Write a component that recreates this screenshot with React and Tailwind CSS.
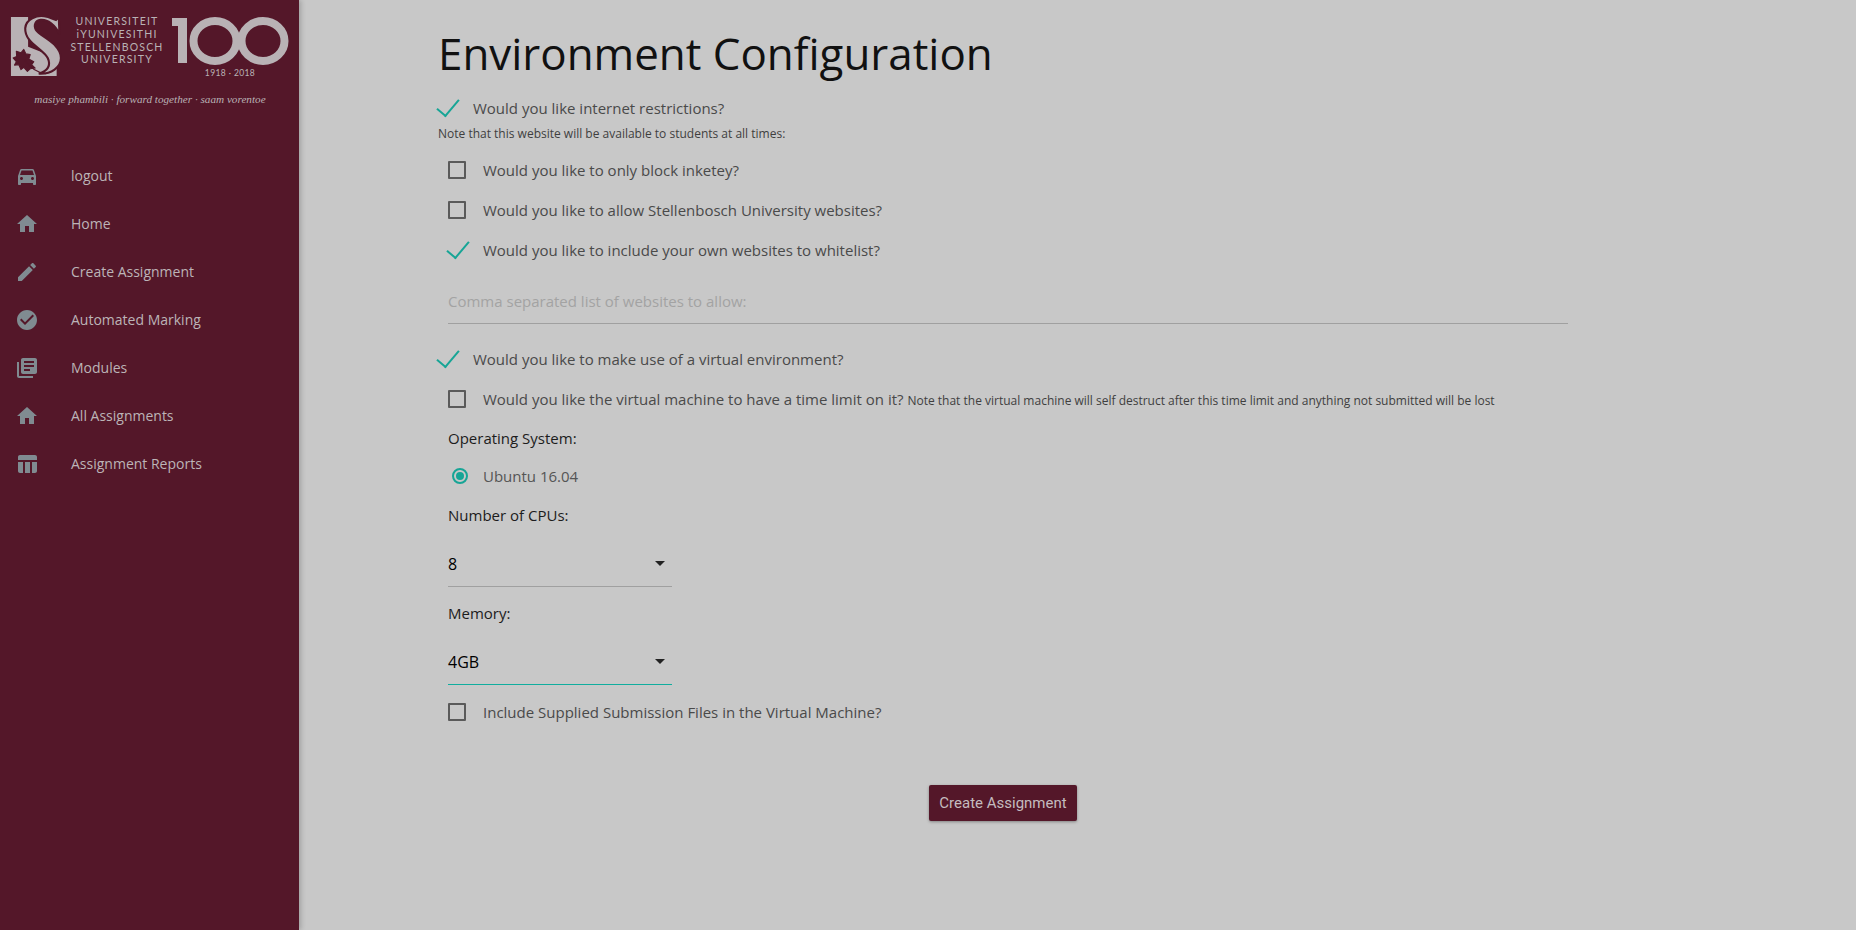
import React from "react";

const mainFont = "font-['Open_Sans',sans-serif]";

const navItems = [
  { label: "logout", d: "M18.92 6.01C18.72 5.42 18.16 5 17.5 5h-11c-.66 0-1.21.42-1.42 1.01L3 12v8c0 .55.45 1 1 1h1c.55 0 1-.45 1-1v-1h12v1c0 .55.45 1 1 1h1c.55 0 1-.45 1-1v-8l-2.08-5.99zM6.5 16c-.83 0-1.5-.67-1.5-1.5S5.67 13 6.5 13s1.5.67 1.5 1.5S7.33 16 6.5 16zm11 0c-.83 0-1.5-.67-1.5-1.5s.67-1.5 1.5-1.5 1.5.67 1.5 1.5-.67 1.5-1.5 1.5zM5 11l1.5-4.5h11L19 11H5z" },
  { label: "Home", d: "M10 20v-6h4v6h5v-8h3L12 3 2 12h3v8z" },
  { label: "Create Assignment", d: "M3 17.25V21h3.75L17.81 9.94l-3.75-3.75L3 17.25zM20.71 7.04c.39-.39.39-1.02 0-1.41l-2.34-2.34c-.39-.39-1.02-.39-1.41 0l-1.83 1.83 3.75 3.75 1.83-1.83z" },
  { label: "Automated Marking", d: "M12 2C6.48 2 2 6.48 2 12s4.48 10 10 10 10-4.48 10-10S17.52 2 12 2zm-2 15l-5-5 1.41-1.41L10 14.17l7.59-7.59L19 8l-9 9z" },
  { label: "Modules", d: "M4 6H2v14c0 1.1.9 2 2 2h14v-2H4V6zm16-4H8c-1.1 0-2 .9-2 2v12c0 1.1.9 2 2 2h12c1.1 0 2-.9 2-2V4c0-1.1-.9-2-2-2zm-1 9H9V9h10v2zm-4 4H9v-2h6v2zm4-8H9V5h10v2z" },
  { label: "All Assignments", d: "M10 20v-6h4v6h5v-8h3L12 3 2 12h3v8z" },
  { label: "Assignment Reports", d: "M10 10.02h5V21h-5zM17 21h3c1.1 0 2-.9 2-2v-9h-5v11zm3-18H5c-1.1 0-2 .9-2 2v3h19V5c0-1.1-.9-2-2-2zM3 19c0 1.1.9 2 2 2h3V10H3v9z" },
];

function Logo() {
  const c = "#b9b2b5";
  const bg = "#541729";
  const sShape = "M156 20L158 66C146 42 125 26 105 28C90 30 85 42 92 55C102 72 162 90 162 130C162 155 135 174 100 172C125 165 135 150 125 130C112 105 60 90 62 50C64 25 95 15 115 18C130 20 140 26 148 28Z";
  return (
    <svg width="299" height="120" viewBox="0 0 299 120" className="block">
      {/* crest */}
      <g transform="translate(3.1 9.5) scale(0.357 0.373)">
        <path fill={c} d="M22 20H70V100L150 130V178H22Z" />
        <path fill={c} stroke={bg} strokeWidth="6" d={sShape} />
        <path fill={bg} stroke={bg} strokeWidth="3" strokeLinejoin="round" d="M28 130L38 126L37 112L50 116L58 107L64 119L76 121L72 133L86 140L80 148L90 157L76 159L68 166L58 155L50 161L44 148L32 149L37 140Z" />
        <path fill="none" stroke={bg} strokeWidth="3" d="M60 135C75 155 95 170 120 172" />
      </g>
      <text x="117" y="25" textAnchor="middle" fill={c} fontFamily="Lato, sans-serif" fontSize="10.5" letterSpacing="1.2">UNIVERSITEIT</text>
      <text x="117" y="38" textAnchor="middle" fill={c} fontFamily="Lato, sans-serif" fontSize="10.5" letterSpacing="1.2">iYUNIVESITHI</text>
      <text x="117" y="51" textAnchor="middle" fill={c} fontFamily="Lato, sans-serif" fontSize="10.5" letterSpacing="1.2">STELLENBOSCH</text>
      <text x="117" y="63" textAnchor="middle" fill={c} fontFamily="Lato, sans-serif" fontSize="10.5" letterSpacing="1.2">UNIVERSITY</text>
      <path fill={c} d="M172 18h15v45h-9V26h-6z" />
      <ellipse cx="215" cy="41" rx="21.5" ry="20" fill="none" stroke={c} strokeWidth="8" />
      <ellipse cx="263" cy="41" rx="21.5" ry="20" fill="none" stroke={c} strokeWidth="8" />
      <text x="230" y="76" textAnchor="middle" fill={c} fontFamily="Lato, sans-serif" fontSize="8.5" letterSpacing="0.4">1918 · 2018</text>
      <text x="150" y="103" textAnchor="middle" fill={c} fontFamily="'Liberation Serif', serif" fontStyle="italic" fontSize="11.2">masiye phambili · forward together · saam vorentoe</text>
    </svg>
  );
}

function Tick() {
  return (
    <span className="flex h-[18px] w-[18px] shrink-0 items-center justify-center">
      <span className="mb-[7px] ml-[2px] block h-[22px] w-3 rotate-[40deg] border-r-2 border-b-2 border-[#17a596]" />
    </span>
  );
}

function Box() {
  return <span className="block h-[18px] w-[18px] shrink-0 rounded-[1px] border-2 border-[#5a5a5a]" />;
}

function Check({ checked, indent, children }) {
  return (
    <label className={`flex h-10 items-center gap-[17px] text-[15px] text-[#4a4a4a] ${indent ? "pl-[10px]" : ""}`}>
      {checked ? <Tick /> : <Box />}
      <span>{children}</span>
    </label>
  );
}

function Select({ value, active }) {
  return (
    <div className={`ml-[10px] flex h-[46px] w-[224px] items-center justify-between border-b text-base text-black ${active ? "border-[#10ad9e]" : "border-[#a0a0a0]"}`}>
      <span>{value}</span>
      <span className="mr-[7px] block h-0 w-0 border-x-[5px] border-t-[5px] border-x-transparent border-t-[#222]" />
    </div>
  );
}

export default function App() {
  return (
    <div className={`flex min-h-[930px] bg-[#c8c8c8] ${mainFont}`}>
      <aside className="z-10 w-[299px] shrink-0 bg-[#541729] shadow-[2px_0_5px_rgba(0,0,0,0.2)]">
        <Logo />
        <nav className="mt-[32px]">
          {navItems.map((item) => (
            <a key={item.label} className="flex h-12 items-center pl-[15px] text-sm text-[#bcb4b7]">
              <svg width="24" height="24" viewBox="0 0 24 24" fill="#808b91" className="mr-8 shrink-0">
                <path d={item.d} />
              </svg>
              {item.label}
            </a>
          ))}
        </nav>
      </aside>

      <main className="flex-1 pl-[139px]">
        <div className="w-[1130px]">
          <h1 className="flex h-[88px] items-center pt-[20px] text-[43.9px] leading-none text-[#111]">Environment Configuration</h1>
          <Check checked>Would you like internet restrictions?</Check>
          <p className="-mt-[4px] mb-[6px] text-xs leading-5 text-[#3f3f3f]">Note that this website will be available to students at all times:</p>
          <Check indent>Would you like to only block inketey?</Check>
          <Check indent>Would you like to allow Stellenbosch University websites?</Check>
          <Check indent checked>Would you like to include your own websites to whitelist?</Check>
          <input
            placeholder="Comma separated list of websites to allow:"
            className="mt-[10px] ml-[10px] block h-[44px] w-[1120px] border-b border-[#a0a0a0] bg-transparent pb-[2px] text-[15px] outline-none placeholder:text-[#a3a3a3]"
          />
          <div className="mt-[15px]">
            <Check checked>Would you like to make use of a virtual environment?</Check>
          </div>
          <Check indent>
            Would you like the virtual machine to have a time limit on it?{" "}
            <span className="text-xs text-[#3f3f3f]">Note that the virtual machine will self destruct after this time limit and anything not submitted will be lost</span>
          </Check>
          <p className="mt-[7px] ml-[10px] text-[15px] leading-6 text-[#1c1c1c]">Operating System:</p>
          <label className="mt-[6px] ml-[14px] flex h-10 items-center gap-[15px] text-[15px] text-[#555]">
            <span className="flex h-4 w-4 items-center justify-center rounded-full border-2 border-[#17a596]">
              <span className="block h-2 w-2 rounded-full bg-[#17a596]" />
            </span>
            Ubuntu 16.04
          </label>
          <p className="mt-[7px] ml-[10px] text-[15px] leading-6 text-[#1c1c1c]">Number of CPUs:</p>
          <div className="mt-[14px]">
            <Select value="8" />
          </div>
          <p className="mt-[14px] ml-[10px] text-[15px] leading-6 text-[#1c1c1c]">Memory:</p>
          <div className="mt-[14px]">
            <Select value="4GB" active />
          </div>
          <div className="mt-[7px]">
            <Check indent>Include Supplied Submission Files in the Virtual Machine?</Check>
          </div>
          <div className="mt-[53px] flex justify-center">
            <button className="h-9 w-[148px] rounded-[2px] bg-[#541729] font-['Roboto',sans-serif] text-[15px] text-[#c4bcbf] shadow-[0_1px_3px_rgba(0,0,0,0.35)]">
              Create Assignment
            </button>
          </div>
        </div>
      </main>
    </div>
  );
}
